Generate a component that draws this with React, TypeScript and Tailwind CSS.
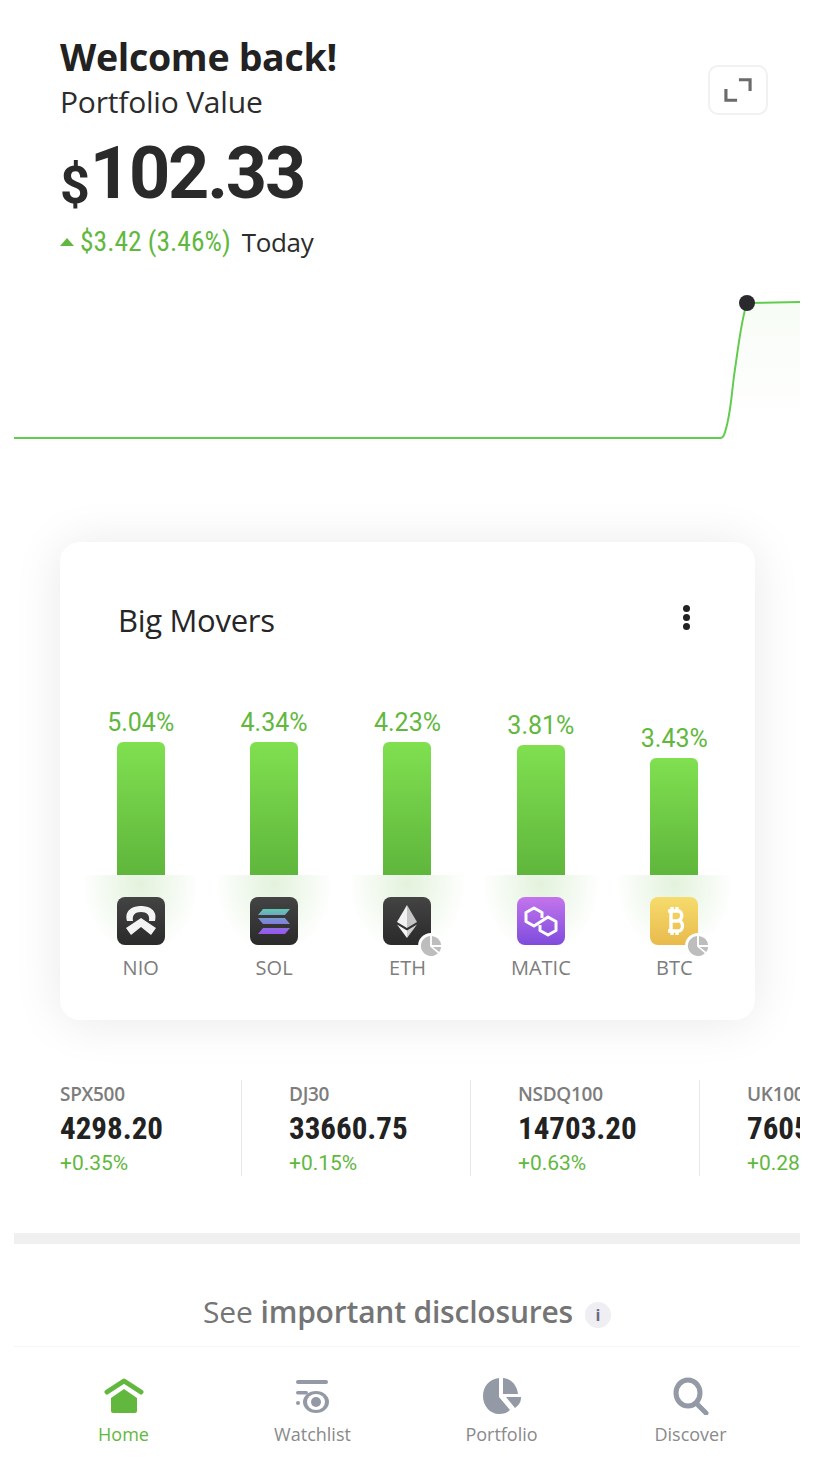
const movers = [
  { pct: "5.04%", h: "h-[133px]", sym: "NIO", badge: false },
  { pct: "4.34%", h: "h-[133px]", sym: "SOL", badge: false },
  { pct: "4.23%", h: "h-[133px]", sym: "ETH", badge: true },
  { pct: "3.81%", h: "h-[130px]", sym: "MATIC", badge: false },
  { pct: "3.43%", h: "h-[117px]", sym: "BTC", badge: true },
];

const indices = [
  { name: "SPX500", value: "4298.20", change: "+0.35%" },
  { name: "DJ30", value: "33660.75", change: "+0.15%" },
  { name: "NSDQ100", value: "14703.20", change: "+0.63%" },
  { name: "UK100", value: "7605.10", change: "+0.28%" },
];

const NioIcon = () => (
  <svg viewBox="0 0 48 48" className="h-full w-full">
    <path d="M10 24 C7 13 16 9 24 9 C32 9 41 13 38 24 L32 24 C33 18 30 15 24 15 C18 15 15 18 16 24 Z" fill="#f4f4f4" />
    <path d="M9 31 L24 21 L39 31 L34 38 L24 30 L14 38 Z" fill="#f4f4f4" />
  </svg>
);

const SolIcon = () => (
  <svg viewBox="0 0 48 48" className="h-full w-full">
    <defs>
      <linearGradient id="sol" x1="0" y1="0" x2="0" y2="1">
        <stop offset="0" stopColor="#5fc9b0" />
        <stop offset="0.5" stopColor="#7d86d8" />
        <stop offset="1" stopColor="#9a55ee" />
      </linearGradient>
    </defs>
    <path d="M13 12 H40 L35 18 H8 Z M8 21 H35 L40 27 H13 Z M13 31 H40 L35 37 H8 Z" fill="url(#sol)" />
  </svg>
);

const EthIcon = () => (
  <svg viewBox="0 0 48 48" className="h-full w-full">
    <path d="M24 8 L14 25 L24 31 Z" fill="#f2f2f2" />
    <path d="M24 8 L34 25 L24 31 Z" fill="#c4c4c4" />
    <path d="M14 27.5 L24 41 L24 33.5 Z" fill="#f7f7f7" />
    <path d="M34 27.5 L24 41 L24 33.5 Z" fill="#cfcfcf" />
  </svg>
);

const MaticIcon = () => (
  <svg viewBox="0 0 48 48" className="h-full w-full">
    <path
      d="M25 21 V15.5 L17 11 L9 15.5 V24.5 L17 29 L31 20 L39 24.5 V33.5 L31 38 L23 33.5 V28"
      fill="none"
      stroke="#fff"
      strokeWidth="3"
      strokeLinejoin="round"
    />
  </svg>
);

const BtcIcon = () => (
  <svg viewBox="0 0 48 48" className="h-full w-full">
    <path
      d="M18 14 H28 C33 14 33 23 28 23.5 C34 24 34 34 28 34 H18 M21 14 V34 M21 24 H28 M22 10 V14 M27 10 V14 M22 34 V38 M27 34 V38"
      fill="none"
      stroke="#fff"
      strokeWidth="3.4"
    />
  </svg>
);

const PieBadge = () => (
  <span className="absolute -right-[13px] -bottom-[14px] h-[26px] w-[26px] rounded-full bg-white p-[2px]">
    <svg viewBox="0 0 24 24" className="h-full w-full">
      <path d="M11 1 A11 11 0 1 0 19.5 20 L11 12.5 Z" fill="#bdbdbd" />
      <path d="M13 1 A11 11 0 0 1 23 11 H13 Z" fill="#bdbdbd" />
      <path d="M14 13 H23 A11 11 0 0 1 21 18.5 Z" fill="#bdbdbd" />
    </svg>
  </span>
);

const tile: Record<string, string> = {
  NIO: "bg-gradient-to-b from-[#444444] to-[#2a2a2a]",
  SOL: "bg-gradient-to-b from-[#444444] to-[#2a2a2a]",
  ETH: "bg-gradient-to-b from-[#444444] to-[#2a2a2a]",
  MATIC: "bg-gradient-to-b from-[#c474ec] to-[#7f4bdc]",
  BTC: "bg-gradient-to-b from-[#f5dc6c] to-[#e9ba4c]",
};

const icons: Record<string, React.ReactNode> = {
  NIO: <NioIcon />,
  SOL: <SolIcon />,
  ETH: <EthIcon />,
  MATIC: <MaticIcon />,
  BTC: <BtcIcon />,
};

const HomeIcon = () => (
  <svg viewBox="0 0 40 36" className="h-[36px] w-[40px]">
    <path d="M3 14 L20 3 L37 14" fill="none" stroke="#62b83e" strokeWidth="5" strokeLinecap="round" strokeLinejoin="round" />
    <path d="M7 20 L20 11 L33 20 V33 Q33 35 31 35 H9 Q7 35 7 33 Z" fill="#62b83e" />
  </svg>
);

const WatchIcon = () => (
  <svg viewBox="0 0 40 36" className="h-[36px] w-[40px]">
    <rect x="3" y="2" width="32" height="4" rx="2" fill="#939aa5" />
    <rect x="3" y="13" width="12" height="3.5" rx="1.7" fill="#939aa5" />
    <rect x="3" y="23" width="4" height="4" rx="2" fill="#939aa5" />
    <ellipse cx="23" cy="24" rx="13" ry="11" fill="#939aa5" />
    <ellipse cx="23" cy="24" rx="9" ry="8" fill="#fff" />
    <circle cx="23" cy="24" r="5" fill="#939aa5" />
  </svg>
);

const PieIcon = () => (
  <svg viewBox="0 0 40 38" className="h-[38px] w-[40px]">
    <path d="M17 1 C7 2 1 10 1 19 C1 29 8 37 17 37 C21 37 25 36 28 33 L17 20 Z" fill="#939aa5" />
    <path d="M21 1 C30 2 35 9 36 17 H21 Z" fill="#939aa5" />
    <path d="M24 20 H39 C39 25 37 28 33 31 Z" fill="#939aa5" />
  </svg>
);

const SearchIcon = () => (
  <svg viewBox="0 0 40 38" className="h-[38px] w-[40px]">
    <ellipse cx="17" cy="16" rx="12" ry="13" fill="none" stroke="#939aa5" strokeWidth="5" />
    <path d="M26 27 L35 36" stroke="#939aa5" strokeWidth="5" strokeLinecap="round" />
  </svg>
);

const tabs = [
  { label: "Home", icon: <HomeIcon />, color: "text-[#62b83e]" },
  { label: "Watchlist", icon: <WatchIcon />, color: "text-[#8a8a8a]" },
  { label: "Portfolio", icon: <PieIcon />, color: "text-[#8a8a8a]" },
  { label: "Discover", icon: <SearchIcon />, color: "text-[#8a8a8a]" },
];

const App = () => {
  return (
    <div className="h-[1466px] w-[814px] overflow-hidden bg-white px-[14px] pt-2 font-['Open_Sans',sans-serif] text-[#222222]">
      <div className="flex h-[1458px] flex-col overflow-hidden rounded-t-[6px] bg-white">
        <div className="relative h-[282px] shrink-0 px-[46px] pt-[24px]">
          <h1 className="text-[37.5px] leading-[50px] font-bold tracking-[-0.3px]">Welcome back!</h1>
          <p className="text-[30px] leading-[40px] font-normal tracking-[-0.2px] text-[#2c2c2c]">Portfolio Value</p>
          <div className="mt-[14px] flex items-end font-['Roboto',sans-serif] leading-none font-bold text-[#2a2a2a]">
            <span className="mb-[1px] text-[52px] leading-[50px]">$</span>
            <span className="text-[72px] leading-[76px] tracking-[-2.2px]">102.33</span>
          </div>
          <div className="mt-[13px] flex items-center text-[26px] leading-[34px]">
            <span className="mr-[6px] h-0 w-0 border-x-[7px] border-b-[8px] border-x-transparent border-b-[#62b83e]" />
            <span className="font-['Roboto',sans-serif] text-[27.5px] text-[#62b83e] font-stretch-[85%]">$3.42 (3.46%)</span>
            <span className="ml-[11px] tracking-[-0.3px] text-[#2c2c2c]">Today</span>
          </div>
          <button className="absolute top-[57px] right-[32px] flex h-[50px] w-[60px] items-center justify-center rounded-[10px] border-2 border-[#f1f1f1] bg-white">
            <svg viewBox="0 0 32 28" className="h-[26px] w-[30px]" fill="none" stroke="#6b6b6b" strokeWidth="3.4">
              <path d="M17 3 H29 V15" />
              <path d="M3 13 V25 H15" />
            </svg>
          </button>
        </div>

        <svg viewBox="0 0 786 160" className="block h-[160px] w-[786px] shrink-0">
          <defs>
            <linearGradient id="area" x1="0" y1="0" x2="0" y2="1">
              <stop offset="0" stopColor="#62b83e" stopOpacity="0.05" />
              <stop offset="1" stopColor="#62b83e" stopOpacity="0" />
            </linearGradient>
          </defs>
          <path d="M716 142 C724 70 727 30 733 13 L786 12 V142 Z" fill="url(#area)" />
          <path d="M0 148 H706 Q709 148 710 145 C716 130 717 110 720 86 C724 60 727 30 733 13 L786 12" fill="none" stroke="#62cc4e" strokeWidth="2" />
          <circle cx="733" cy="13" r="8" fill="#2a2a2e" />
        </svg>

        <div className="mx-[46px] mt-[92px] h-[478px] w-[695px] shrink-0 rounded-[20px] bg-white shadow-[0_2px_50px_rgba(0,0,0,0.09)]">
          <div className="flex items-start justify-between pt-[58px] pr-[65px] pl-[58px]">
            <h2 className="text-[31px] leading-[40px] font-medium tracking-[-0.3px] text-[#262626]">Big Movers</h2>
            <div className="mt-[5px] flex flex-col gap-[2px]">
              <span className="h-[7px] w-[7px] rounded-full bg-[#222222]" />
              <span className="h-[7px] w-[7px] rounded-full bg-[#222222]" />
              <span className="h-[7px] w-[7px] rounded-full bg-[#222222]" />
            </div>
          </div>
          <div className="mt-[50px] grid grid-cols-5 px-[14px]">
            {movers.map((m) => (
              <div key={m.sym} className="relative flex flex-col items-center">
                <div className="flex h-[185px] flex-col items-center justify-end">
                  <span className="mb-[3px] font-['Roboto',sans-serif] text-[25px] leading-[32px] text-[#62b83e] font-stretch-[98%]">{m.pct}</span>
                  <div className={`w-[48px] rounded-t-[6px] bg-gradient-to-b from-[#80e050] to-[#5fb63c] ${m.h}`} />
                </div>
                <div className="absolute top-[185px] left-0 h-[78px] w-full bg-[radial-gradient(ellipse_44%_90%_at_50%_12%,rgba(98,184,62,0.18),rgba(98,184,62,0))]" />
                <div className={`relative mt-[22px] h-[48px] w-[48px] rounded-[8px] ${tile[m.sym]}`}>
                  {icons[m.sym]}
                  {m.badge && <PieBadge />}
                </div>
                <span className="mt-[9px] text-[20px] leading-[28px] text-[#7d7d7d]">{m.sym}</span>
              </div>
            ))}
          </div>
        </div>

        <div className="mt-[60px] flex h-[96px] shrink-0 pl-[46px]">
          {indices.map((x, i) => (
            <div key={x.name} className={`shrink-0 ${i < 3 ? "border-r border-[#e8e8e8]" : ""} ${i === 0 ? "w-[182px]" : "w-[229px] pl-[47px]"}`}>
              <div className="mt-[1px] text-[19px] leading-[26px] font-semibold tracking-[-0.3px] text-[#7d7d7d]">{x.name}</div>
              <div className="mt-[4px] font-['Roboto',sans-serif] text-[31px] leading-[36px] font-bold text-[#222222] font-stretch-[85%]">{x.value}</div>
              <div className="mt-[2px] font-['Roboto',sans-serif] text-[21px] leading-[28px] text-[#62b83e]">{x.change}</div>
            </div>
          ))}
        </div>

        <div className="mt-[57px] h-[11px] shrink-0 bg-[#f0f0f0]" />

        <div className="flex h-[102px] shrink-0 items-center justify-center pt-[34px] text-[30px] leading-[40px] text-[#757575]">
          <span className="tracking-[-0.2px]">See</span>
          <span className="ml-[8px] font-semibold tracking-[-0.2px]">important disclosures</span>
          <span className="mt-[6px] ml-[12px] flex h-[26px] w-[26px] items-center justify-center rounded-full bg-[#eeeef3] text-[16px] leading-none font-bold text-[#6a6a80]">i</span>
        </div>

        <nav className="grid h-[120px] shrink-0 grid-cols-4 border-t border-[#f6f6f6] bg-white px-[15px] pt-[30px]">
          {tabs.map((t) => (
            <div key={t.label} className="flex flex-col items-center">
              <div className="flex h-[38px] items-center justify-center">{t.icon}</div>
              <span className={`mt-[7px] text-[18px] leading-[24px] ${t.color}`}>{t.label}</span>
            </div>
          ))}
        </nav>
      </div>
    </div>
  );
};

export default App;
